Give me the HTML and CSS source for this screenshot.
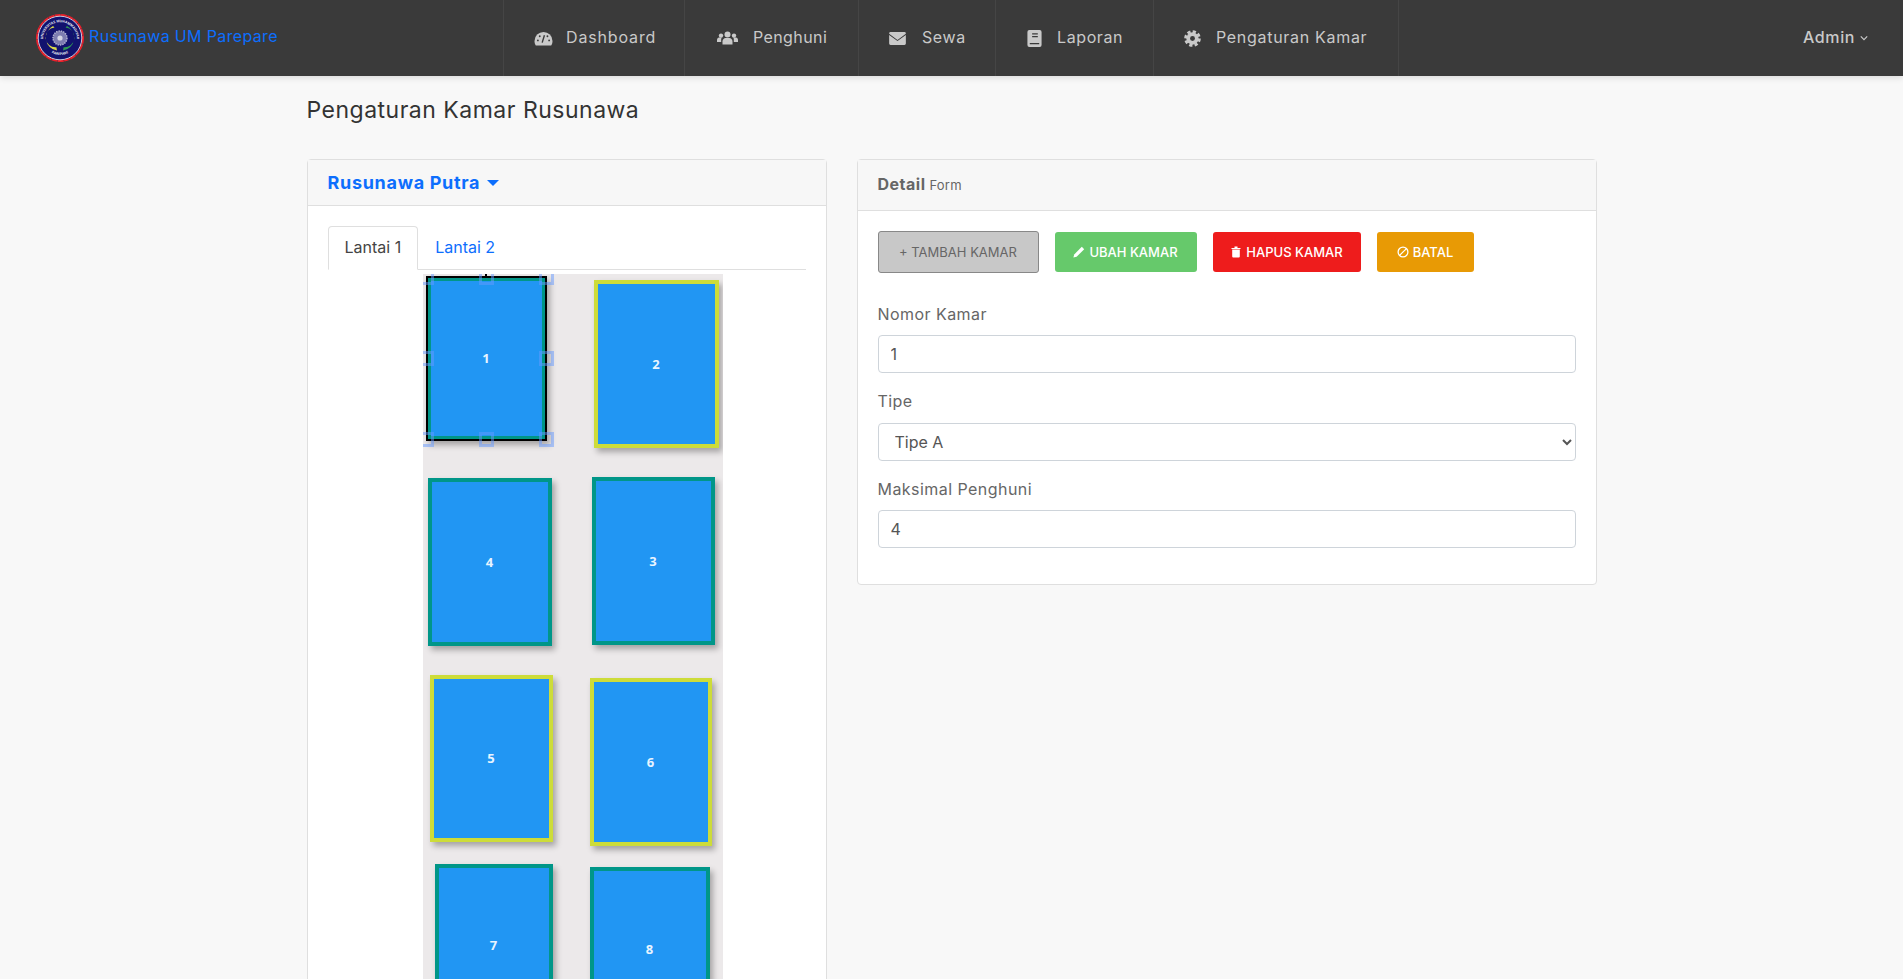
FILE: index.html
```html
<!DOCTYPE html>
<html lang="id">
  <head>
    <meta charset="UTF-8" />
    <title>Pengaturan Kamar Rusunawa</title>
    <link rel="stylesheet" href="styles.css">
  </head>
  <body>
    <nav class="navbar">
      <a class="brand" href="#">
        <svg class="logo" viewBox="0 0 50 50">
          <defs>
            <path id="arc-top" d="M9 32a17 17 0 1 1 32 0" />
            <path id="arc-bottom" d="M11 35a17.500 17.500 0 0 0 28 0" />
          </defs>
          <circle cx="25" cy="25" r="23" fill="#12126e" stroke="#e8202a" stroke-width="2" stroke-dasharray="6 0.4" />
          <circle cx="25" cy="25" r="21.800" fill="none" stroke="#f4f4f4" stroke-width="0.800" />
          <text class="logo-text"><textPath href="#arc-top" startOffset="50%" text-anchor="middle">UNIVERSITAS MUHAMMADIYAH</textPath></text>
          <text class="logo-text"><textPath href="#arc-bottom" startOffset="50%" text-anchor="middle">PAREPARE</textPath></text>
          <path d="M18 13a13 13 0 0 0 4 24.500l-.6-3.200a9.500 9.500 0 0 1-1.900-19.800z" fill="#d8d84a" />
          <path d="M32 13a13 13 0 0 1-4 24.500l.6-3.200a9.500 9.500 0 0 0 1.900-19.800z" fill="#2f9a55" />
          <circle cx="25" cy="25" r="7" fill="#7d7db0" stroke="#b8b8d4" stroke-width="1.400" stroke-dasharray="1.400 1" />
          <circle cx="25" cy="25" r="2.600" fill="#d4d4e4" />
        </svg>
        <span>Rusunawa UM Parepare</span>
      </a>
      <ul class="menu">
        <li class="menu-item item-dashboard">
          <svg class="menu-icon icon-dashboard" viewBox="0 0 20 16">
            <path d="M10 1a9.600 9.600 0 0 0-9.600 9.600c0 1.900.5 3.400 1.400 4.900h16.400c.9-1.500 1.400-3 1.400-4.900A9.600 9.600 0 0 0 10 1z" />
            <path d="M8.600 12.400 11 4.600" stroke="#3a3a3a" stroke-width="1.500" fill="none" />
            <circle cx="4" cy="10" r="1" fill="#3a3a3a" /><circle cx="6" cy="5.600" r="1" fill="#3a3a3a" />
            <circle cx="14.200" cy="5.600" r="1" fill="#3a3a3a" /><circle cx="16" cy="10" r="1" fill="#3a3a3a" />
          </svg>
          Dashboard
        </li>
        <li class="menu-item item-penghuni">
          <svg class="menu-icon icon-users" viewBox="0 0 21 14">
            <circle cx="10.500" cy="3.400" r="3" /><circle cx="4" cy="4.600" r="2.200" /><circle cx="17" cy="4.600" r="2.200" />
            <path d="M5.500 13.500v-3c0-2.200 1.600-3.400 3-3.400h4c1.400 0 3 1.200 3 3.400v3z" />
            <path d="M0 11V9c0-1.400 1-2.400 2-2.400h2.800C4 7.400 4.200 9 4.200 11zM21 11V9c0-1.400-1-2.400-2-2.400h-2.800c.8.8.6 2.400.6 4.400z" />
          </svg>
          Penghuni
        </li>
        <li class="menu-item item-sewa">
          <svg class="menu-icon icon-mail" viewBox="0 0 18 14">
            <path d="M1.500 0h15A1.500 1.500 0 0 1 18 1.500V2L9 8.500 0 2v-.5A1.500 1.500 0 0 1 1.500 0z" />
            <path d="M0 3.200 9 9.700l9-6.500v9.300a1.500 1.500 0 0 1-1.500 1.500h-15A1.500 1.500 0 0 1 0 12.500z" />
          </svg>
          Sewa
        </li>
        <li class="menu-item item-laporan">
          <svg class="menu-icon icon-book" viewBox="0 0 15 18">
            <path d="M2 0h11a2 2 0 0 1 2 2v14a2 2 0 0 1-2 2H2a2 2 0 0 1-2-2V2a2 2 0 0 1 2-2z" />
            <path d="M5 4h6M5 7h6M2.500 14.500h10" stroke="#3a3a3a" stroke-width="1.300" fill="none" />
          </svg>
          Laporan
        </li>
        <li class="menu-item item-kamar">
          <svg class="menu-icon icon-gear" viewBox="0 0 18 18">
            <circle cx="9" cy="9" r="7.300" fill="none" stroke="#c9c9c9" stroke-width="3" stroke-dasharray="3.400 2.330" />
            <circle cx="9" cy="9" r="6.500" />
            <circle cx="9" cy="9" r="2.600" fill="#3a3a3a" />
          </svg>
          Pengaturan Kamar
        </li>
      </ul>
      <div class="user-menu">
        <span>Admin</span>
        <svg class="chevron" viewBox="0 0 10 6"><path d="M1 1l4 4 4-4" /></svg>
      </div>
    </nav>

    <main class="container">
      <h1 class="page-title">Pengaturan Kamar Rusunawa</h1>
      <div class="row">
        <section class="col col-left">
          <div class="card">
            <div class="card-header building-header">
              <a class="building-link" href="#">Rusunawa Putra <span class="caret"></span></a>
            </div>
            <div class="card-body">
              <ul class="tabs">
                <li class="tab tab-active">Lantai 1</li>
                <li class="tab">Lantai 2</li>
              </ul>
              <div class="floor-canvas">
                <div class="room room-green room-1 room-selected">1</div>
                <div class="room room-lime room-2">2</div>
                <div class="room room-green room-3">3</div>
                <div class="room room-green room-4">4</div>
                <div class="room room-lime room-5">5</div>
                <div class="room room-lime room-6">6</div>
                <div class="room room-green room-7">7</div>
                <div class="room room-green room-8">8</div>
                <span class="rotate-tick"></span>
                <span class="handle handle-tl"></span>
                <span class="handle handle-tm"></span>
                <span class="handle handle-tr"></span>
                <span class="handle handle-ml"></span>
                <span class="handle handle-mr"></span>
                <span class="handle handle-bl"></span>
                <span class="handle handle-bm"></span>
                <span class="handle handle-br"></span>
              </div>
            </div>
          </div>
        </section>

        <section class="col col-right">
          <div class="card">
            <div class="card-header detail-header"><strong>Detail</strong> <small>Form</small></div>
            <div class="card-body">
              <div class="actions">
                <button class="btn btn-add">+ TAMBAH KAMAR</button>
                <button class="btn btn-edit">
                  <svg class="btn-icon" viewBox="0 0 12 12"><path d="M8.800.8 11.200 3.200 3.600 10.800.4 11.600 1.200 8.400z" /></svg>
                  UBAH KAMAR
                </button>
                <button class="btn btn-delete">
                  <svg class="btn-icon" viewBox="0 0 12 12"><path d="M1.500 2h9v1h-9zM4.500.6h3V2h-3zM2.200 3.500h7.600v7a1 1 0 0 1-1 1H3.200a1 1 0 0 1-1-1z" /></svg>
                  HAPUS KAMAR
                </button>
                <button class="btn btn-cancel">
                  <svg class="btn-icon btn-icon-line" viewBox="0 0 12 12"><circle cx="6" cy="6" r="4.900" /><path d="M2.600 9.400 9.400 2.600" /></svg>
                  BATAL
                </button>
              </div>
              <div class="form-group">
                <label for="nomor">Nomor Kamar</label>
                <input id="nomor" class="field" type="text" value="1" />
              </div>
              <div class="form-group">
                <label for="tipe">Tipe</label>
                <select id="tipe" class="field">
                  <option>Tipe A</option>
                  <option>Tipe B</option>
                </select>
              </div>
              <div class="form-group">
                <label for="maks">Maksimal Penghuni</label>
                <input id="maks" class="field" type="text" value="4" />
              </div>
            </div>
          </div>
        </section>
      </div>
    </main>
  </body>
</html>
```

FILE: styles.css
```css
html,
body {
  height: 100%;
  overflow: hidden;
}
body {
  margin: 0;
  font-family: Inter, "Open Sans", sans-serif;
  font-size: 16px;
  line-height: 1.6;
  color: #666;
  background-color: #f8f8f8;
}
a {
  text-decoration: none;
}

/* navbar */
.navbar {
  display: flex;
  align-items: stretch;
  height: 76px;
  background-color: #3a3a3a;
  box-shadow: 0 2px 6px rgba(0, 0, 0, 0.12);
  position: relative;
}
.brand {
  display: flex;
  align-items: center;
  width: 503px;
  padding: 0 0 0 35px;
  box-sizing: border-box;
  color: #0d6efd;
  font-size: 16px;
  letter-spacing: 0.35px;
}
.brand span {
  margin-left: 4px;
  margin-top: -2px;
}
.logo {
  width: 50px;
  height: 50px;
}
.logo-text {
  font-family: "Open Sans", sans-serif;
  font-size: 3.400px;
  font-weight: 700;
  letter-spacing: 0;
  fill: #e8e8f0;
}
.menu {
  display: flex;
  list-style: none;
  margin: 0;
  padding: 0;
  border-left: 1px solid #454545;
  flex: 1;
}
.menu-item {
  box-sizing: border-box;
  display: flex;
  align-items: center;
  padding-left: 30px;
  color: #c9c9c9;
  letter-spacing: 0.6px;
  border-right: 1px solid #454545;
}
.item-dashboard { width: 181px; letter-spacing: 0.85px; }
.item-penghuni { width: 174px; letter-spacing: 0.4px; }
.item-sewa { width: 137px; }
.item-laporan { width: 158px; }
.item-kamar { width: 245px; letter-spacing: 0.7px; }
.menu-icon {
  fill: #c9c9c9;
  flex: none;
}
.icon-dashboard { width: 19px; height: 15px; margin-right: 13px; }
.icon-users { width: 21px; height: 14px; margin: 0 15px 0 2px; }
.icon-mail { width: 17px; height: 13px; margin-right: 16px; }
.icon-book { width: 15px; height: 17px; margin: 0 15px 0 1px; }
.icon-gear { width: 17px; height: 17px; margin: 0 15px 0 0; }
.user-menu {
  display: flex;
  align-items: center;
  gap: 5px;
  padding-right: 35px;
  color: #c9c9c9;
  font-weight: 500;
  letter-spacing: 0.6px;
}
.chevron {
  width: 8px;
  height: 6px;
  fill: none;
  stroke: #c9c9c9;
  stroke-width: 1.500;
}

/* page */
.container {
  width: 1320px;
  margin: 0 auto;
}
.page-title {
  margin: 16px 15px 31px;
  font-size: 23px;
  font-weight: 400;
  line-height: 36px;
  letter-spacing: 0.5px;
  color: #333;
}
.row {
  display: flex;
}
.col {
  box-sizing: border-box;
  padding: 0 15px;
}
.col-left {
  width: 41.6667%;
}
.col-right {
  width: 58.3333%;
  padding-right: 14px;
}
.card {
  background: #fff;
  border: 1px solid #dfdfdf;
  border-radius: 4px;
}
.card-header {
  box-sizing: border-box;
  background: #f7f7f7;
  border-bottom: 1px solid #dfdfdf;
  padding: 0 20px;
  display: flex;
  align-items: center;
}
.card-body {
  padding: 20px;
}
.building-header {
  height: 46px;
  padding-top: 1px;
}
.building-link {
  color: #0d6efd;
  font-size: 18px;
  font-weight: 700;
  letter-spacing: 0.7px;
}
.caret {
  display: inline-block;
  margin-left: 2px;
  vertical-align: 3px;
  border-top: 6px solid #0d6efd;
  border-left: 6px solid transparent;
  border-right: 6px solid transparent;
}
.detail-header {
  height: 51px;
  gap: 4px;
  color: #666;
}
.detail-header strong {
  letter-spacing: 0.5px;
}
.detail-header small {
  font-size: 13px;
  letter-spacing: 0.2px;
}

/* tabs */
.tabs {
  display: flex;
  list-style: none;
  margin: 0;
  padding: 0;
  height: 43px;
  border-bottom: 1px solid #dfdfdf;
}
.tab {
  box-sizing: border-box;
  height: 44px;
  padding: 0 16px;
  line-height: 41px;
  color: #0d6efd;
  border: 1px solid transparent;
  border-radius: 4px 4px 0 0;
}
.tab-active {
  color: #444;
  background: #fff;
  border-color: #dfdfdf #dfdfdf #fff;
}

/* floor plan */
.floor-canvas {
  position: relative;
  width: 300px;
  height: 820px;
  margin: 4px 0 0 95px;
  background-color: #ece9ea;
  overflow: hidden;
}
.room {
  position: absolute;
  box-sizing: border-box;
  display: flex;
  align-items: center;
  justify-content: center;
  background-color: #2196f3;
  border: 4px solid;
  box-shadow: 3px 4px 6px rgba(0, 0, 0, 0.3);
  color: #e8f4ff;
  font-family: "Open Sans", sans-serif;
  font-size: 13px;
  font-weight: 700;
}
.room-green {
  border-color: #009688;
}
.room-lime {
  border-color: #cddc39;
}
.room-selected {
  border: 2px solid #000;
  box-shadow: inset 0 0 0 3px #009688, 3px 4px 6px rgba(0, 0, 0, 0.3);
}
.room-1 { left: 3px; top: 2px; width: 121px; height: 165px; }
.room-2 { left: 171px; top: 6px; width: 125px; height: 168px; }
.room-3 { left: 169px; top: 203px; width: 123px; height: 168px; }
.room-4 { left: 5px; top: 204px; width: 124px; height: 168px; }
.room-5 { left: 7px; top: 401px; width: 123px; height: 167px; }
.room-6 { left: 167px; top: 404px; width: 122px; height: 168px; }
.room-7 { left: 12px; top: 590px; width: 118px; height: 162px; }
.room-8 { left: 167px; top: 593px; width: 120px; height: 164px; }

.handle {
  position: absolute;
  box-sizing: border-box;
  width: 15px;
  height: 15px;
  border: 3px solid rgba(102, 153, 255, 0.5);
}
.handle-tl { left: -4px; top: -4px; }
.handle-tm { left: 56px; top: -4px; }
.handle-tr { left: 116px; top: -4px; }
.handle-ml { left: -4px; top: 77px; }
.handle-mr { left: 116px; top: 77px; }
.handle-bl { left: -4px; top: 158px; }
.handle-bm { left: 56px; top: 158px; }
.handle-br { left: 116px; top: 158px; }
.rotate-tick {
  position: absolute;
  left: 62px;
  top: 0;
  width: 2px;
  height: 3px;
  background: #000;
}

/* form */
.actions {
  display: flex;
  align-items: center;
  gap: 16px;
  margin-bottom: 28.500px;
}
.btn {
  display: flex;
  align-items: center;
  justify-content: center;
  gap: 4px;
  box-sizing: border-box;
  height: 40px;
  padding: 0;
  border: 0;
  border-radius: 3px;
  color: #fff;
  font-family: inherit;
  font-size: 13px;
  font-weight: 500;
}
.btn-add {
  width: 161px;
  height: 42px;
  background: #c8c8c8;
  border: 1px solid #888;
  color: #666;
  font-weight: 400;
}
.btn-edit {
  width: 142px;
  background: #66c96b;
}
.btn-delete {
  width: 148px;
  background: #ee1c1c;
}
.btn-cancel {
  width: 97px;
  background: #e89a05;
}
.btn-icon {
  width: 12px;
  height: 12px;
  fill: #fff;
}
.btn-icon-line {
  fill: none;
  stroke: #fff;
  stroke-width: 1.300;
}
.form-group {
  margin-bottom: 16px;
}
.form-group label {
  display: block;
  margin-bottom: 8px;
  color: #666;
  letter-spacing: 0.45px;
}
.field {
  display: block;
  box-sizing: border-box;
  width: 100%;
  height: 38px;
  padding: 0 12px;
  border: 1px solid #ced4da;
  border-radius: 4px;
  background: #fff;
  color: #555;
  font-family: inherit;
  font-size: 16px;
}
```
